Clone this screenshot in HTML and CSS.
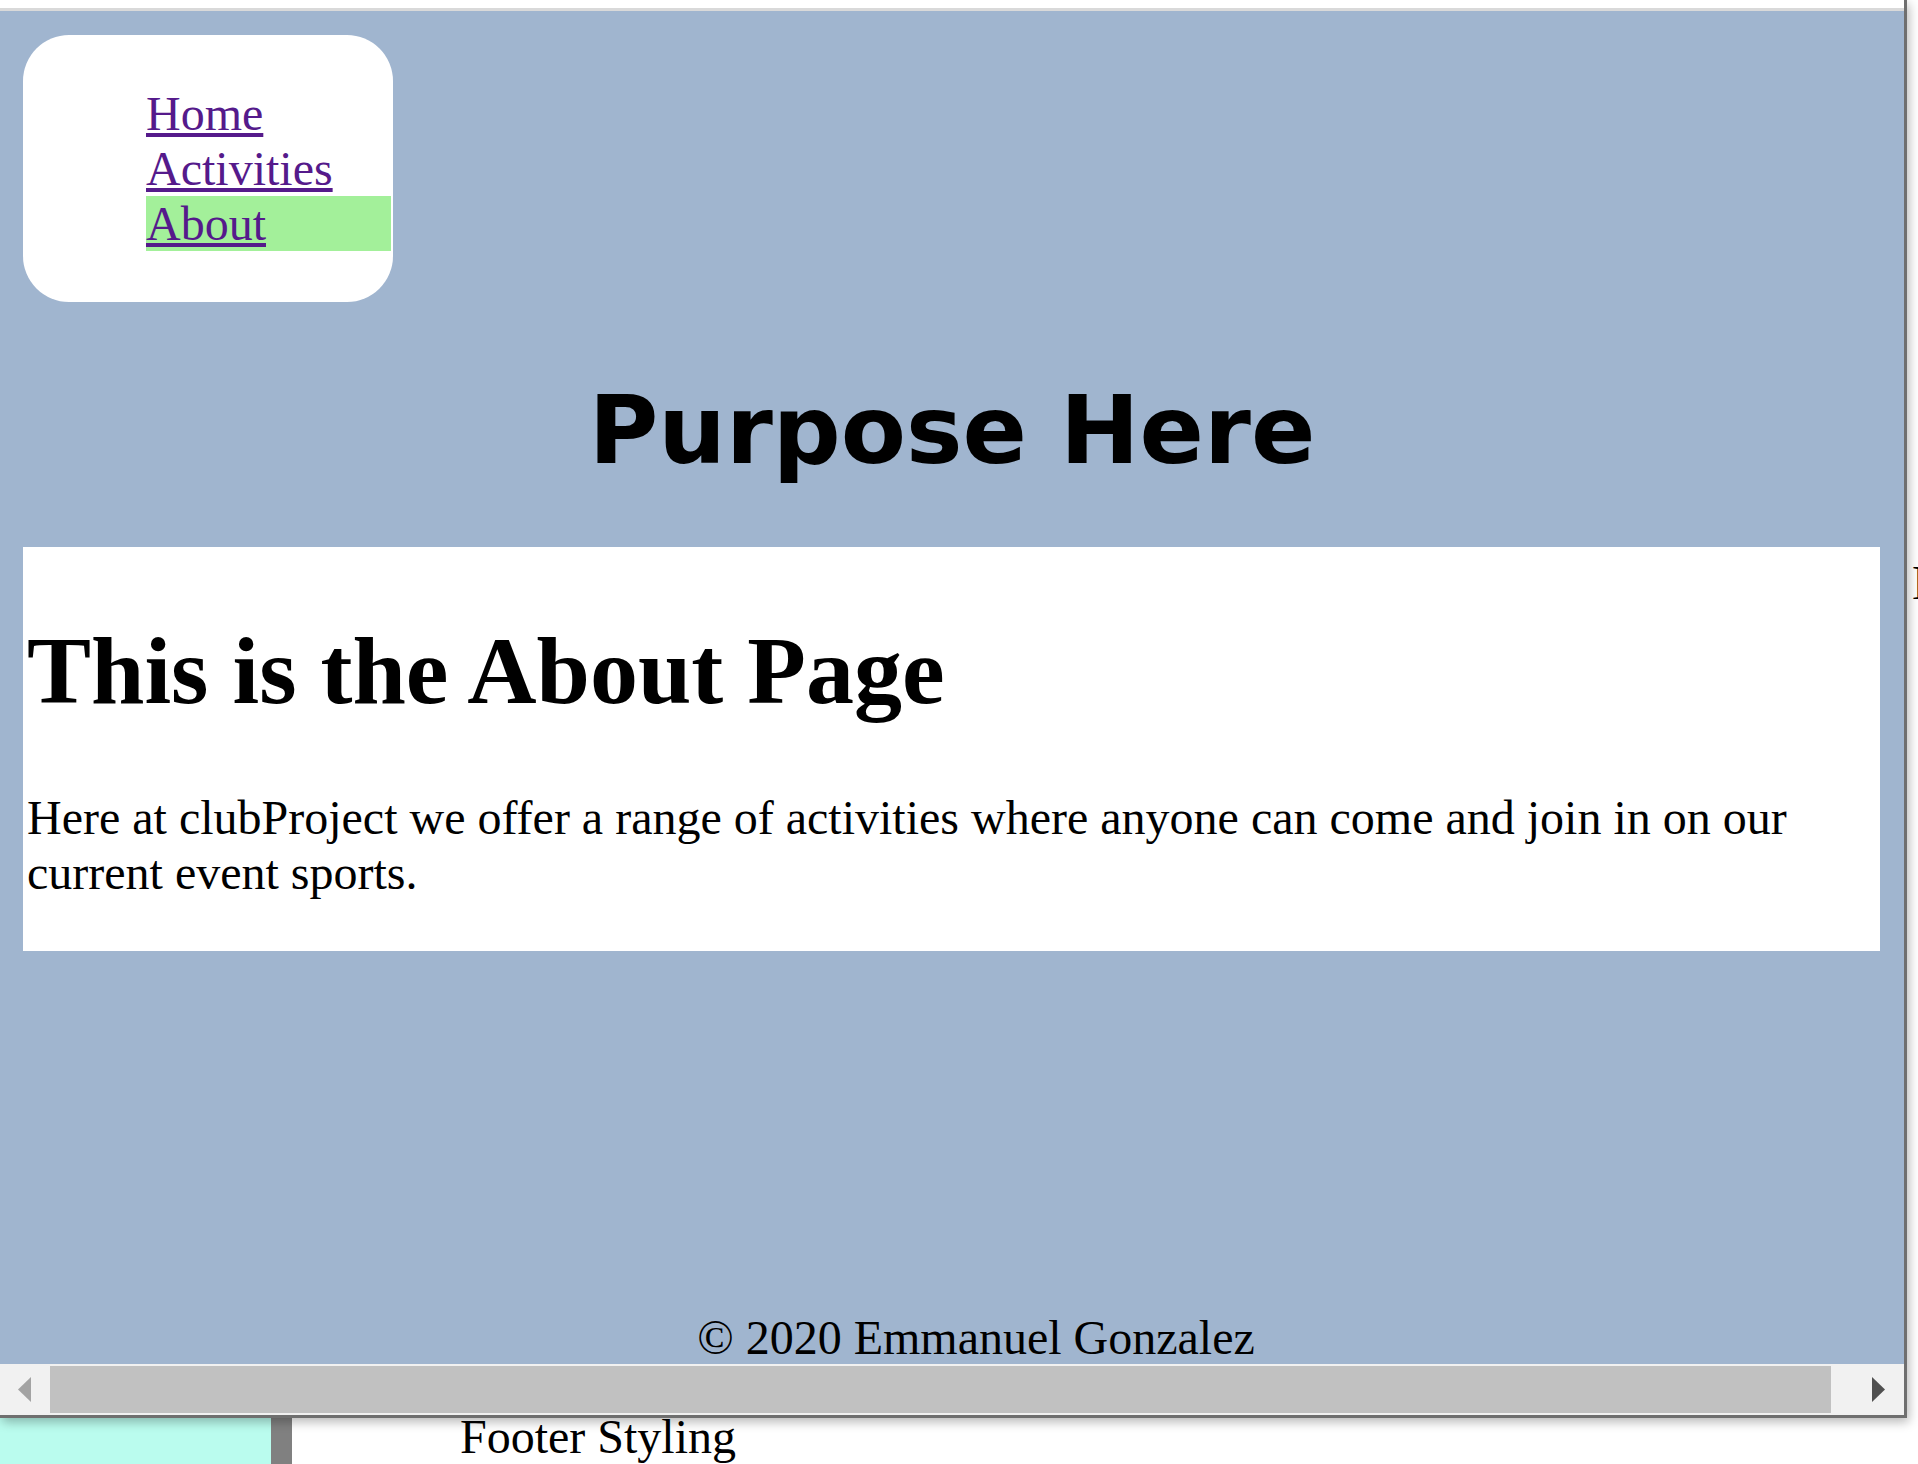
FILE: index.html
```html
<!DOCTYPE html>
<html lang="en">
<head>
<meta charset="utf-8">
<title>About</title>
<link rel="stylesheet" href="styles.css">
</head>
<body>
<div class="top">
  <div class="window">
    <div class="strip"></div>
    <div class="viewport">
      <nav class="card">
        <ul class="menu">
          <li><a href="#">Home</a></li>
          <li><a href="#">Activities</a></li>
          <li class="active"><a href="#">About</a></li>
        </ul>
      </nav>
      <h1 class="purpose">Purpose Here</h1>
      <section class="content">
        <h1 class="title">This is the About Page</h1>
        <p class="text">Here at clubProject we offer a range of activities where anyone can come and join in on our current event sports.</p>
      </section>
      <footer class="copy">© 2020 Emmanuel Gonzalez</footer>
    </div>
    <div class="hscroll">
      <div class="btn btn-left">
        <svg width="13" height="25" viewBox="0 0 13 25"><polygon points="13,0 13,25 0,12.5" fill="#a3a3a3"/></svg>
      </div>
      <div class="thumb"></div>
      <div class="btn btn-right">
        <svg width="13" height="25" viewBox="0 0 13 25"><polygon points="0,0 0,25 13,12.5" fill="#505050"/></svg>
      </div>
    </div>
  </div>
  <div class="side"><span class="peek">H</span></div>
</div>
<div class="below">
  <div class="cyan"></div>
  <div class="bar"></div>
  <p class="footer-styling">Footer Styling</p>
</div>
</body>
</html>
```

FILE: styles.css
```css
html, body {
  margin: 0;
  padding: 0;
  background: #ffffff;
  overflow: hidden;
}

body {
  font-family: "Liberation Serif", "Times New Roman", serif;
  font-size: 48px;
  color: #000;
  width: 1918px;
  height: 1464px;
}

.top {
  display: flex;
  height: 1418px;
}

.window {
  position: relative;
  z-index: 2;
  width: 1904px;
  flex: none;
  border-right: 3px solid #6f6f6f;
  border-bottom: 3px solid #6f6f6f;
  box-shadow: 2px 4px 10px rgba(0, 0, 0, 0.28);
  display: flex;
  flex-direction: column;
  background: #fff;
}

.strip {
  height: 8px;
  background: #ffffff;
  border-bottom: 3px solid #d9d9d9;
}

.viewport {
  height: 1353px;
  background: #a0b5cf;
  display: flex;
  flex-direction: column;
  overflow: hidden;
}

.card {
  align-self: flex-start;
  margin: 24px 0 0 23px;
  width: 370px;
  box-sizing: border-box;
  padding: 51px 2px 51px 123px;
  background: #ffffff;
  border-radius: 46px;
}

.menu {
  list-style: none;
  margin: 0;
  padding: 0;
}

.menu li {
  line-height: 55px;
  height: 55px;
}

.menu a {
  color: #551a8b;
  text-decoration: underline;
}

.menu .active {
  background: #a3f09a;
}

.purpose {
  font-family: "DejaVu Sans", Verdana, sans-serif;
  font-weight: bold;
  font-size: 95px;
  text-align: center;
  margin: 73px 0 62px;
  line-height: normal;
}

.content {
  margin: 0 24px 0 23px;
  background: #ffffff;
  padding: 4px 4px 3px;
  display: flow-root;
}

.title {
  font-size: 96px;
  font-weight: bold;
  margin: 64px 0;
}

.text {
  margin: 48px 0;
  line-height: 55px;
}

.copy {
  margin-top: auto;
  text-align: center;
  padding-left: 48px;
  line-height: 55px;
  margin-bottom: -1px;
}

.hscroll {
  height: 51px;
  background: #f1f1f1;
  display: flex;
  align-items: stretch;
}

.btn {
  display: flex;
  align-items: center;
}

.btn-left {
  width: 50px;
  padding-left: 18px;
  box-sizing: border-box;
}

.btn-right {
  width: 73px;
  padding-left: 41px;
  box-sizing: border-box;
}

.thumb {
  flex: 1;
  margin: 2px 0;
  background: #c1c1c1;
}

.side {
  flex: 1;
  overflow: hidden;
  position: relative;
  z-index: 1;
}

.peek {
  display: block;
  margin: 555px 0 0 5px;
  line-height: 55px;
  white-space: nowrap;
}

.below {
  display: flex;
  height: 46px;
}

.cyan {
  width: 271px;
  background: #bafcee;
}

.bar {
  width: 21px;
  background: #808080;
}

.footer-styling {
  margin: 0;
  padding-left: 168px;
  line-height: 38px;
  white-space: nowrap;
}
```
